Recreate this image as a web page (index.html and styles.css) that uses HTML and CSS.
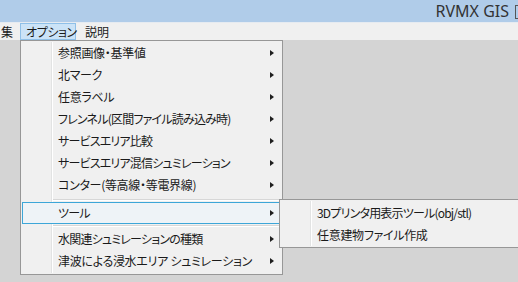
FILE: index.html
```html
<!DOCTYPE html>
<html lang="ja">
<head>
<meta charset="utf-8">
<link rel="stylesheet" href="styles.css">
</head>
<body>
<div class="window">
  <div class="titlebar"><span class="title">RVMX GIS</span><span class="title-cut"></span></div>
  <div class="menubar">
    <span class="mb-item cut">集</span>
    <span class="mb-item active">オプション</span>
    <span class="mb-item">説明</span>
  </div>
  <div class="workspace"></div>

  <div class="menu main-menu">
    <div class="gutter"></div>
    <div class="item"><span class="label">参照画像・基準値</span><span class="arrow"></span></div>
    <div class="item"><span class="label">北マーク</span><span class="arrow"></span></div>
    <div class="item"><span class="label">任意ラベル</span><span class="arrow"></span></div>
    <div class="item"><span class="label kana">フレンネル(区間ファイル読み込み時)</span><span class="arrow"></span></div>
    <div class="item"><span class="label kana">サービスエリア比較</span><span class="arrow"></span></div>
    <div class="item"><span class="label kana">サービスエリア混信シュミレーション</span><span class="arrow"></span></div>
    <div class="item"><span class="label">コンター(等高線・等電界線)</span><span class="arrow"></span></div>
    <div class="sep sep-a"></div>
    <div class="item hot"><span class="label kana">ツール</span><span class="arrow"></span></div>
    <div class="sep sep-b"></div>
    <div class="item"><span class="label kana">水関連シュミレーションの種類</span><span class="arrow"></span></div>
    <div class="item"><span class="label">津波による浸水エリア シュミレーション</span><span class="arrow"></span></div>
  </div>

  <div class="menu sub-menu">
    <div class="gutter"></div>
    <div class="item"><span class="label kana">3Dプリンタ用表示ツール(obj/stl)</span></div>
    <div class="item"><span class="label">任意建物ファイル作成</span></div>
  </div>
</div>
</body>
</html>
```
FILE: styles.css
```css
* { box-sizing: border-box; }
html, body { margin: 0; padding: 0; }
body {
  width: 518px;
  height: 282px;
  overflow: hidden;
  font-family: "Noto Sans CJK JP", "Noto Sans", sans-serif;
  font-size: 12px;
  font-feature-settings: "palt" 1;
  color: #1a1a1a;
}
.window {
  position: relative;
  width: 518px;
  height: 282px;
  display: flex;
  flex-direction: column;
  background: #d4d4d4;
}
.titlebar {
  height: 22px;
  background: #b0cce9;
  display: flex;
  justify-content: flex-end;
  align-items: center;
  overflow: hidden;
  white-space: nowrap;
}
.title {
  font-family: "Noto Sans", "DejaVu Sans", sans-serif;
  font-size: 16px;
  color: #333;
  line-height: 22px;
  margin-right: 6px;
}
.title-cut {
  width: 3px;
  height: 14px;
  border-left: 1.5px solid #555;
  border-top: 1.5px solid #555;
  border-bottom: 1.5px solid #555;
  margin-top: 1px;
}
.menubar {
  height: 18px;
  background: #f0f0f0;
  border-top: 1px solid #e6ebf1;
  display: flex;
  align-items: stretch;
}
.mb-item {
  padding: 0 7px;
  line-height: 15px;
  border: 1px solid transparent;
  white-space: nowrap;
}
.mb-item.cut { padding: 0; width: 20px; }
.mb-item.active {
  background: #cbe3f7;
  border-color: #8fc0e8;
  width: 56px;
  padding: 0 0 0 5px;
  letter-spacing: -0.4px;
}
.mb-item:last-child { padding-left: 8px; }
.workspace { flex: 1; }

.menu {
  position: absolute;
  background: #f0f0f0;
  border: 1px solid #979797;
  display: flex;
  flex-direction: column;
}
.main-menu {
  left: 20px;
  top: 40px;
  width: 263px;
  height: 235px;
  padding: 1px 1px 2px 1px;
}
.sub-menu {
  left: 279px;
  top: 199px;
  width: 250px;
  height: 49px;
  padding: 2px 1px;
}
.gutter {
  position: absolute;
  top: 1px;
  bottom: 1px;
  left: 30px;
  width: 2px;
  border-left: 1px solid #e2e3e3;
  border-right: 1px solid #ffffff;
}
.item {
  position: relative;
  height: 22px;
  display: flex;
  align-items: center;
  padding-left: 35px;
  padding-right: 6px;
  border: 1px solid transparent;
  white-space: nowrap;
}
.item .label { flex: 1; line-height: 20px; letter-spacing: -0.3px; }
.item .label.kana { letter-spacing: -0.8px; }
.item.hot {
  border-color: #3ca6d8;
  background: #eef3f7;
}
.arrow {
  width: 0;
  height: 0;
  border-top: 3.5px solid transparent;
  border-bottom: 3.5px solid transparent;
  border-left: 4px solid #1e1e1e;
}
.sep { position: relative; }
.sep-a { height: 7px; }
.sep-b { height: 4px; }
.sep::after {
  content: "";
  position: absolute;
  left: 31px;
  right: 0;
  height: 1px;
  background: #d7d7d7;
  border-bottom: 1px solid #fff;
  box-sizing: content-box;
}
.sep-a::after { top: 3px; }
.sep-b::after { top: 1px; }
```
